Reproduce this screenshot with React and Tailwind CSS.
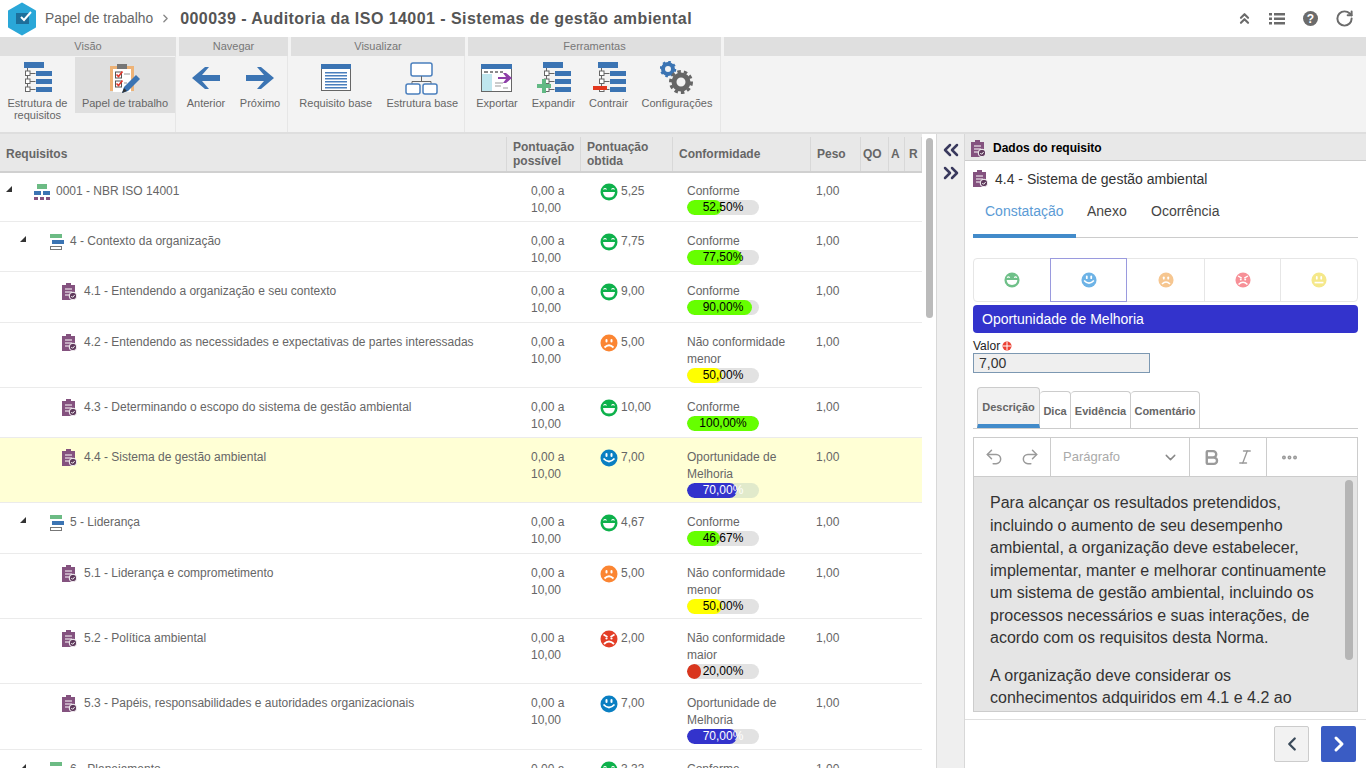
import React from 'react';
import { ChevronRight, ChevronLeft, ChevronDown, ChevronsUp, ChevronsLeft, ChevronsRight, Undo2, Redo2, RotateCw, Bold, Italic, Ellipsis } from 'lucide-react';

const BLUE = '#3b74b3';

// Tree of bars used by the Estrutura / Expandir / Contrair buttons
const TreeIcon = () => (
  <svg width="30" height="34" viewBox="0 0 30 34">
    <rect x="1" y="1" width="20" height="6" fill={BLUE} />
    <path d="M4.5 7v20M4.5 12.5h8M4.5 20.5h8M4.5 28.5h8" stroke="#666" fill="none" />
    {[10, 18, 26].map((y) => (
      <g key={y}>
        <rect x="2.5" y={y} width="4.5" height="4.5" fill="#fff" stroke="#666" />
        <rect x="13" y={y} width="16" height="5" fill={BLUE} />
      </g>
    ))}
  </svg>
);

const PaperIcon = () => (
  <svg width="32" height="33" viewBox="0 0 32 33">
    <rect x="1" y="4" width="24" height="25" fill="#eeb377" />
    <rect x="4" y="7" width="18" height="23" fill="#fff" />
    <rect x="8" y="2" width="10" height="5" fill="#777" />
    <rect x="6.5" y="10" width="6" height="6" fill="none" stroke="#555" />
    <rect x="6.5" y="19" width="6" height="6" fill="none" stroke="#555" />
    <path d="M7.5 12.5l2 2 4-5M7.5 21.5l2 2 4-5" stroke="#e0352b" strokeWidth="1.6" fill="none" />
    <path d="M15 12h6M15 21h3" stroke="#999" />
    <path d="M13 31l2-6 12-12 4 4-12 12z" fill={BLUE} />
    <path d="M13 31l2-5 3 3z" fill="#333" />
  </svg>
);

const Arrow = ({ flip }) => (
  <svg width="28" height="24" viewBox="0 0 28 24" className={flip ? 'rotate-180' : ''}>
    <path d="M0 12L13 1h4l-7 8h18v6H10l7 8h-4z" fill={BLUE} />
  </svg>
);

const BaseReqIcon = () => (
  <svg width="30" height="28" viewBox="0 0 30 28">
    <rect x="0.5" y="0.5" width="29" height="26" fill="#fff" stroke="#666" />
    <rect x="0" y="0" width="30" height="5" fill={BLUE} />
    {[8, 11, 14, 17, 20, 23].map((y) => <rect key={y} x="4" y={y} width="22" height="1.5" fill="#4a7fbd" />)}
  </svg>
);

const BaseTreeIcon = () => (
  <svg width="34" height="33" viewBox="0 0 34 33" fill="#fff" stroke="#4a7fbd" strokeWidth="1.5">
    <rect x="6" y="1" width="21" height="13" rx="2" />
    <path d="M16.5 14v5M7 23v-3.5h19V23" stroke="#666" strokeWidth="1" fill="none" />
    <rect x="1" y="22" width="14" height="10" rx="2" />
    <rect x="18" y="22" width="14" height="10" rx="2" />
  </svg>
);

const ExportIcon = () => (
  <svg width="33" height="28" viewBox="0 0 33 28">
    <rect x="0.5" y="0.5" width="30" height="27" fill="#fff" stroke="#666" />
    <rect x="0" y="0" width="31" height="5" fill={BLUE} />
    <rect x="1" y="10" width="10" height="17" fill="#bfe6ee" />
    <path d="M3 8h4M9 8h3M14 8h3M19 8h3" stroke="#666" strokeWidth="1.5" />
    <path d="M17 13h8l-3-4h3l6 5-6 5h-3l3-4h-8z" fill="#8e3fa8" />
    <path d="M14 19h8M14 22h6M22 24h5" stroke="#999" />
  </svg>
);

const Gears = () => (
  <svg width="34" height="34" viewBox="0 0 34 34">
    <circle cx="8" cy="8" r="5" fill="none" stroke={BLUE} strokeWidth="4" />
    <circle cx="8" cy="8" r="7" fill="none" stroke={BLUE} strokeWidth="2.5" strokeDasharray="2.5 3" />
    <circle cx="21" cy="21" r="7" fill="none" stroke="#666" strokeWidth="5" />
    <circle cx="21" cy="21" r="10.5" fill="none" stroke="#666" strokeWidth="3" strokeDasharray="3.5 3" />
  </svg>
);

const ReqIcon = ({ className = '' }) => (
  <svg width="15" height="17" viewBox="0 0 15 17" className={className}>
    <path d="M0 2h4V0h5v2h4v15H0z" fill="#84527f" />
    <path d="M3 6h7M3 9h7M3 12h4" stroke="#fff" />
    <circle cx="11" cy="13" r="3.8" fill="#5f3a5c" stroke="#fff" />
    <path d="M9.3 13l1.3 1.3 2-2.2" stroke="#fff" fill="none" />
  </svg>
);

const RootIcon = () => (
  <svg width="16" height="16" viewBox="0 0 16 16" className="shrink-0">
    <rect x="3" y="0" width="10" height="5" fill="#6cbb84" />
    <rect x="0" y="7" width="7" height="4" fill={BLUE} />
    <rect x="9" y="7" width="7" height="4" fill={BLUE} />
    <rect x="0" y="13" width="4" height="3" fill="#84527f" />
    <rect x="6" y="13" width="4" height="3" fill="#84527f" />
    <rect x="12" y="13" width="4" height="3" fill="#84527f" />
  </svg>
);

const SectionIcon = () => (
  <svg width="14" height="16" viewBox="0 0 14 16" className="shrink-0">
    <rect x="0" y="0" width="12" height="4" fill="#6cbb84" />
    <rect x="2" y="6" width="12" height="4" fill={BLUE} />
    <rect x="0.5" y="12.5" width="11" height="3" fill="#fff" stroke="#777" />
  </svg>
);

const Caret = () => (
  <svg width="6" height="6" viewBox="0 0 6 6" className="mb-[6px] shrink-0"><path d="M6 0v6H0z" fill="#333" /></svg>
);

// Mouth and brows for each face
const Face = ({ type, color, size = 18 }) => (
  <svg width={size} height={size} viewBox="0 0 18 18" className="shrink-0">
    <circle cx="9" cy="9" r="8.5" fill={color} />
    {type === 'laugh' && (
      <g>
        <path d="M3.5 6.5q1.5-2 3 0M11.5 6.5q1.5-2 3 0" stroke="#fff" strokeWidth="1.2" fill="none" />
        <path d="M3 9h12q-.5 5.5-6 5.5T3 9z" fill="#fff" />
      </g>
    )}
    {type === 'smile' && (
      <g fill="#fff">
        <rect x="5.5" y="4" width="2" height="4" rx="1" />
        <rect x="10.5" y="4" width="2" height="4" rx="1" />
        <path d="M3.5 9.5q5.5 6 11 0" stroke="#fff" strokeWidth="1.8" fill="none" />
      </g>
    )}
    {type === 'frown' && (
      <g fill="#fff">
        <rect x="5.5" y="5" width="2" height="3.5" rx="1" />
        <rect x="10.5" y="5" width="2" height="3.5" rx="1" />
        <path d="M4.5 13.5q4.500-4.500 9 0" stroke="#fff" strokeWidth="1.8" fill="none" />
      </g>
    )}
    {type === 'angry' && (
      <g>
        <path d="M3.5 4.5l4 2.5M14.5 4.5l-4 2.5" stroke="#fff" strokeWidth="1.6" />
        <circle cx="6.5" cy="8.5" r="1.1" fill="#fff" />
        <circle cx="11.5" cy="8.5" r="1.1" fill="#fff" />
        <path d="M4 14q5-5 10 0" stroke="#fff" strokeWidth="1.8" fill="none" />
      </g>
    )}
    {type === 'neutral' && (
      <g fill="#fff">
        <rect x="5.5" y="4.5" width="2" height="4" rx="1" />
        <rect x="10.5" y="4.5" width="2" height="4" rx="1" />
        <rect x="4" y="11" width="10" height="1.8" />
      </g>
    )}
  </svg>
);

const GROUPS = [
  {
    title: 'Visão', width: 'w-[176px]',
    items: [
      { label: <>Estrutura de<br />requisitos</>, icon: <TreeIcon />, w: 'w-[75px]' },
      { label: 'Papel de trabalho', icon: <PaperIcon />, w: 'w-[100px]', active: true },
    ],
  },
  {
    title: 'Navegar', width: 'w-[109px]',
    items: [
      { label: 'Anterior', icon: <Arrow />, w: 'w-[54px]' },
      { label: 'Próximo', icon: <Arrow flip />, w: 'w-[54px]' },
    ],
  },
  {
    title: 'Visualizar', width: 'w-[174px]',
    items: [
      { label: 'Requisito base', icon: <BaseReqIcon />, w: 'w-[90px]' },
      { label: 'Estrutura base', icon: <BaseTreeIcon />, w: 'w-[84px]' },
    ],
  },
  {
    title: 'Ferramentas', width: 'w-[253px]',
    items: [
      { label: 'Exportar', icon: <ExportIcon />, w: 'w-[58px]' },
      { label: 'Expandir', icon: <span className="pl-[7px]"><TreeIcon /></span>, w: 'w-[55px]', badge: 'plus' },
      { label: 'Contrair', icon: <span className="pl-[7px]"><TreeIcon /></span>, w: 'w-[55px]', badge: 'minus' },
      { label: 'Configurações', icon: <Gears />, w: 'w-[82px]' },
    ],
  },
];

const FACES = {
  laugh: '#0db14b',
  smile: '#0a7fc2',
  frown: '#fb8532',
  angry: '#e33e27',
};

const GREEN = '#66ff00';
const ROWS = [
  { h: 'h-[49px]', kind: 'root', text: '0001 - NBR ISO 14001', face: 'laugh', score: '5,25', status: ['Conforme'], pct: '52,50%', fill: 48, color: GREEN },
  { h: 'h-[50px]', kind: 'section', text: '4 - Contexto da organização', face: 'laugh', score: '7,75', status: ['Conforme'], pct: '77,50%', fill: 77, color: GREEN },
  { h: 'h-[51px]', kind: 'leaf', text: '4.1 - Entendendo a organização e seu contexto', face: 'laugh', score: '9,00', status: ['Conforme'], pct: '90,00%', fill: 90, color: GREEN },
  { h: 'h-[65px]', kind: 'leaf', text: '4.2 - Entendendo as necessidades e expectativas de partes interessadas', face: 'frown', score: '5,00', status: ['Não conformidade', 'menor'], pct: '50,00%', fill: 49, color: '#ffff00' },
  { h: 'h-[50px]', kind: 'leaf', text: '4.3 - Determinando o escopo do sistema de gestão ambiental', face: 'laugh', score: '10,00', status: ['Conforme'], pct: '100,00%', fill: 100, color: GREEN },
  { h: 'h-[65px]', kind: 'leaf', text: '4.4 - Sistema de gestão ambiental', face: 'smile', score: '7,00', status: ['Oportunidade de', 'Melhoria'], pct: '70,00%', fill: 70, color: '#3333cc', light: true, selected: true },
  { h: 'h-[51px]', kind: 'section', text: '5 - Liderança', face: 'laugh', score: '4,67', status: ['Conforme'], pct: '46,67%', fill: 46, color: GREEN },
  { h: 'h-[65px]', kind: 'leaf', text: '5.1 - Liderança e comprometimento', face: 'frown', score: '5,00', status: ['Não conformidade', 'menor'], pct: '50,00%', fill: 49, color: '#ffff00' },
  { h: 'h-[65px]', kind: 'leaf', text: '5.2 - Política ambiental', face: 'angry', score: '2,00', status: ['Não conformidade', 'maior'], pct: '20,00%', fill: 20, color: '#d9361e' },
  { h: 'h-[66px]', kind: 'leaf', text: '5.3 - Papéis, responsabilidades e autoridades organizacionais', face: 'smile', score: '7,00', status: ['Oportunidade de', 'Melhoria'], pct: '70,00%', fill: 70, color: '#3333cc', light: true },
  { h: 'h-[50px]', kind: 'section', text: '6 - Planejamento', face: 'laugh', score: '3,33', status: ['Conforme'], pct: '33,33%', fill: 33, color: GREEN },
];

const COLS = [
  { label: 'Requisitos', w: 'w-[507px] pl-[6px]' },
  { label: <>Pontuação<br />possível</>, w: 'w-[74px] pl-[6px]' },
  { label: <>Pontuação<br />obtida</>, w: 'w-[92px] pl-[6px]' },
  { label: 'Conformidade', w: 'w-[138px] pl-[6px]' },
  { label: 'Peso', w: 'w-[50px] pl-[6px]' },
  { label: 'QO', w: 'w-[28px] pl-[2px]' },
  { label: 'A', w: 'w-[16px] pl-[2px]' },
  { label: 'R', w: 'w-[17px] pl-[4px]' },
];

const FACE_BUTTONS = [
  { type: 'laugh', color: '#6fc089', w: 'w-[76px]' },
  { type: 'smile', color: '#6db3e6', w: 'w-[77px] -my-px h-[44px] border border-[#9a9ade]' },
  { type: 'frown', color: '#f6c690', w: 'w-[77px]' },
  { type: 'angry', color: '#f79097', w: 'w-[76px] border-l border-[#e6e6e6]' },
  { type: 'neutral', color: '#f5e88a', w: 'flex-1 border-l border-[#e6e6e6]' },
];

const ProgressBar = ({ row }) => (
  <div className={`relative h-[15px] w-[72px] overflow-hidden rounded-full ${row.selected ? 'bg-[#e1eacb]' : 'bg-[#e2e2e2]'}`}>
    <div className="h-full rounded-full" style={{ width: `${row.fill}%`, backgroundColor: row.color }} />
    <div className={`absolute inset-0 text-center text-[12px] leading-[15px] ${row.light ? 'text-white' : 'text-black'}`}>{row.pct}</div>
  </div>
);

const Row = ({ row }) => (
  <div className={`flex ${row.h} shrink-0 border-b border-[#ebebeb] pt-[11px] text-[12px] leading-[17px] text-[#666] first:pt-[10px] ${row.selected ? 'bg-[#ffffd5]' : 'bg-white'}`}>
    <div className="w-[507px]">
      {row.kind === 'root' && (
        <div className="flex items-center pl-[6px]">
          <Caret />
          <span className="ml-[22px] mr-[6px]"><RootIcon /></span>
          <span>{row.text}</span>
        </div>
      )}
      {row.kind === 'section' && (
        <div className="flex items-center pl-[20px]">
          <Caret />
          <span className="ml-[24px] mr-[6px]"><SectionIcon /></span>
          <span>{row.text}</span>
        </div>
      )}
      {row.kind === 'leaf' && (
        <div className="flex items-center pl-[62px]">
          <ReqIcon className="mr-[7px] shrink-0" />
          <span>{row.text}</span>
        </div>
      )}
    </div>
    <div className="w-[74px] pl-[24px]">0,00 a<br />10,00</div>
    <div className="flex w-[92px] gap-[3px] pl-[19px]">
      <Face type={row.face} color={FACES[row.face]} />
      <span>{row.score}</span>
    </div>
    <div className="w-[138px] pl-[14px]">
      {row.status.map((s) => <div key={s}>{s}</div>)}
      <ProgressBar row={row} />
    </div>
    <div className="w-[50px] pl-[5px]">1,00</div>
  </div>
);

const Toolbar = () => (
  <div className="flex h-[97px] shrink-0 gap-[3px] border-b-2 border-[#dedede] bg-[#f3f3f3]">
    {GROUPS.map((g) => (
      <div key={g.title} className={`${g.width} flex flex-col`}>
        <div className="h-[19px] bg-[#dfdfdf] text-center text-[11px] leading-[18px] text-[#777]">{g.title}</div>
        <div className="flex flex-1 border-r border-[#e6e6e6]">
          {g.items.map((it, i) => (
            <div key={i} className={`${it.w} relative mt-[1px] h-[56px] pt-[3px] text-center text-[11px] leading-[12px] text-[#666] ${it.active ? 'bg-[#dfdfdf]' : ''}`}>
              <div className="flex h-[36px] items-center justify-center">{it.icon}</div>
              <div className="mt-[1px] whitespace-nowrap">{it.label}</div>
              {it.badge === 'plus' && (
                <svg width="14" height="14" viewBox="0 0 14 14" className="absolute left-[11px] top-[22px]">
                  <path d="M5 0h4v5h5v4H9v5H5V9H0V5h5z" fill="#62b984" />
                </svg>
              )}
              {it.badge === 'minus' && <div className="absolute left-[12px] top-[29px] h-[4px] w-[14px] bg-[#e3371e]" />}
            </div>
          ))}
        </div>
      </div>
    ))}
    <div className="flex-1">
      <div className="h-[19px] bg-[#dfdfdf]" />
    </div>
  </div>
);

const TopBar = () => (
  <div className="flex h-[37px] shrink-0 items-center bg-white">
    <svg width="30" height="34" viewBox="0 0 30 34" className="ml-[7px] mr-[8px]">
      <path d="M15 1.5l13 7.5v16l-13 7.5L2 25V9z" fill="#2aa7d8" stroke="#2aa7d8" strokeWidth="2" strokeLinejoin="round" />
      <rect x="9" y="11" width="13" height="11" fill="#1d6f9b" />
      <path d="M14 15l3 3 7-8" stroke="#fff" strokeWidth="2" fill="none" />
    </svg>
    <span className="mt-[2px] text-[13.8px] text-[#666]">Papel de trabalho</span>
    <ChevronRight size={13} strokeWidth={2.5} className="ml-[6px] mr-[8px] text-[#888]" />
    <span className="text-[16px] font-bold tracking-[0.45px] text-[#555]">000039 - Auditoria da ISO 14001 - Sistemas de gestão ambiental</span>
    <div className="ml-auto flex items-center text-[#6b6b6b]">
      <ChevronsUp size={17} strokeWidth={3} />
      <svg width="16" height="12" viewBox="0 0 16 12" className="ml-[16px]" fill="#6b6b6b">
        <rect x="0" y="0" width="3" height="2.5" /><rect x="5" y="0" width="11" height="2.5" />
        <rect x="0" y="4.5" width="3" height="2.5" /><rect x="5" y="4.5" width="11" height="2.5" />
        <rect x="0" y="9" width="3" height="2.5" /><rect x="5" y="9" width="11" height="2.5" />
      </svg>
      <span className="ml-[18px] flex h-[15px] w-[15px] items-center justify-center rounded-full bg-[#6b6b6b] text-[12px] font-bold leading-none text-white">?</span>
      <RotateCw size={19} strokeWidth={2.5} className="ml-[17px] mr-[12px]" />
    </div>
  </div>
);

const EditorText = () => (
  <div className="relative h-[234px] overflow-hidden bg-[#e5e5e5] pl-[16px] pr-[28px] pt-[15px] text-[16px] leading-[22.5px] text-[#333]">
    <p>Para alcançar os resultados pretendidos, incluindo o aumento de seu desempenho ambiental, a organização deve estabelecer, implementar, manter e melhorar continuamente um sistema de gestão ambiental, incluindo os processos necessários e suas interações, de acordo com os requisitos desta Norma.</p>
    <p className="mt-[15px]">A organização deve considerar os conhecimentos adquiridos em 4.1 e 4.2 ao</p>
    <div className="absolute right-[4px] top-[3px] h-[180px] w-[8px] rounded-full bg-[#b5b5b5]" />
  </div>
);

const DetailPanel = () => (
  <div className="flex w-[401px] shrink-0 flex-col">
    <div className="flex h-[27px] shrink-0 items-center border-b border-[#ccc] bg-[#e8e8e8] pl-[6px] pt-[2px] text-[12px] font-bold text-black">
      <ReqIcon className="mr-[7px]" />
      Dados do requisito
    </div>
    <div className="flex h-[558px] flex-col pl-[8px] pr-[8px]">
      <div className="flex items-center pt-[9px] text-[14px] leading-[16px] text-[#333]">
        <ReqIcon className="mr-[7px]" />
        4.4 - Sistema de gestão ambiental
      </div>
      <div className="mt-[10px] flex h-[41px] shrink-0 border-b border-[#ccc] text-[14px] text-[#444]">
        <div className="-mb-px w-[103px] border-b-4 border-[#428bca] pl-[12px] pt-[4px] text-[#5b9bd5]">Constatação</div>
        <div className="w-[63px] pl-[11px] pt-[4px]">Anexo</div>
        <div className="pl-[12px] pt-[4px]">Ocorrência</div>
      </div>
      <div className="mt-[20px] flex h-[44px] shrink-0 rounded-[4px] border border-[#e6e6e6]">
        {FACE_BUTTONS.map((b) => (
          <div key={b.type} className={`flex items-center justify-center ${b.w}`}>
            <Face type={b.type} color={b.color} size={16} />
          </div>
        ))}
      </div>
      <div className="mt-[3px] flex h-[28px] shrink-0 items-center rounded-[4px] bg-[#3333cc] pl-[9px] text-[14px] text-white">Oportunidade de Melhoria</div>
      <div className="mt-[6px] flex h-[13px] items-center text-[12px] text-[#222]">
        Valor
        <svg width="10" height="10" viewBox="0 0 10 10" className="ml-[2px]"><circle cx="5" cy="5" r="4.5" fill="#ec4033" /><path d="M5 1v8M1 5h8" stroke="#fff" /></svg>
      </div>
      <div className="mt-[1px] flex h-[20px] w-[177px] shrink-0 items-center border border-[#7c98b2] bg-[#efefef] pl-[5px] text-[14px] text-[#333]">7,00</div>
      <div className="mt-[15px] flex h-[41px] shrink-0 items-end border-b border-[#ccc] pl-[4px] text-[11px] font-bold text-[#666]">
        <div className="h-[41px] w-[63px] rounded-t-[4px] border border-b-4 border-[#ccc] border-b-[#428bca] bg-[#f1f1f1] pt-[11px] text-center">Descrição</div>
        <div className="h-[37px] w-[31px] rounded-t-[4px] border-r border-t border-[#ccc] pt-[11px] text-center">Dica</div>
        <div className="h-[37px] w-[60px] rounded-t-[4px] border-r border-t border-[#ccc] pt-[11px] text-center">Evidência</div>
        <div className="h-[37px] w-[69px] rounded-t-[4px] border-r border-t border-[#ccc] pt-[11px] text-center">Comentário</div>
      </div>
      <div className="mt-[8px] border border-[#ccc]">
        <div className="flex h-[39px] items-center border-b border-[#ccc] text-[#9a9a9a]">
          <div className="flex h-full w-[77px] items-center gap-[16px] border-r border-[#ccc] pl-[10px]">
            <Undo2 size={20} strokeWidth={1.8} />
            <Redo2 size={20} strokeWidth={1.8} />
          </div>
          <div className="flex h-full w-[139px] items-center justify-between border-r border-[#ccc] pl-[12px] pr-[10px] text-[13px] text-[#aaa]">
            Parágrafo
            <ChevronDown size={17} className="text-[#888]" />
          </div>
          <div className="flex h-full w-[77px] items-center gap-[15px] border-r border-[#ccc] pl-[12px]">
            <Bold size={19} strokeWidth={3} />
            <Italic size={18} strokeWidth={1.8} />
          </div>
          <Ellipsis size={19} strokeWidth={3} className="ml-[13px]" />
        </div>
        <EditorText />
      </div>
    </div>
    <div className="flex flex-1 items-start justify-end gap-[12px] border-t border-[#e0e0e0] pr-[10px] pt-[6px]">
      <div className="flex h-[36px] w-[35px] items-center justify-center rounded-[2px] border border-[#ccc] bg-[#f2f2f2] text-[#3a4a5a]"><ChevronLeft size={22} strokeWidth={2.5} /></div>
      <div className="flex h-[36px] w-[35px] items-center justify-center rounded-[2px] bg-[#3a5cc4] text-white"><ChevronRight size={24} strokeWidth={3} /></div>
    </div>
  </div>
);

export default function App() {
  return (
    <div className="flex h-[768px] w-full flex-col overflow-hidden bg-white font-['Liberation_Sans',Arial,sans-serif]">
      <TopBar />
      <Toolbar />
      <div className="flex min-h-0 flex-1">
        <div className="flex w-[936px] shrink-0">
          <div className="w-[922px] shrink-0">
            <div className="flex h-[39px] border-b-2 border-[#d0d0d0] bg-[#e8e8e8] pt-[3px] text-[12px] font-bold leading-[14px] text-[#666]">
              {COLS.map((c, i) => (
                <div key={i} className={`${c.w} flex shrink-0 items-center border-r border-[#d8d8d8]`}>
                  <span>{c.label}</span>
                </div>
              ))}
            </div>
            <div className="flex flex-col">
              {ROWS.map((r) => <Row key={r.text} row={r} />)}
            </div>
          </div>
          <div className="w-[14px] pl-[4px] pt-[4px]">
            <div className="h-[180px] w-[7px] rounded-full bg-[#bbb]" />
          </div>
        </div>
        <div className="flex w-[29px] shrink-0 flex-col items-center border-x border-[#d8d8d8] bg-[#efefef] pt-[4px] text-[#3a3a5e]">
          <ChevronsLeft size={24} strokeWidth={2.5} />
          <ChevronsRight size={24} strokeWidth={2.5} className="-mt-px" />
        </div>
        <DetailPanel />
      </div>
    </div>
  );
}
